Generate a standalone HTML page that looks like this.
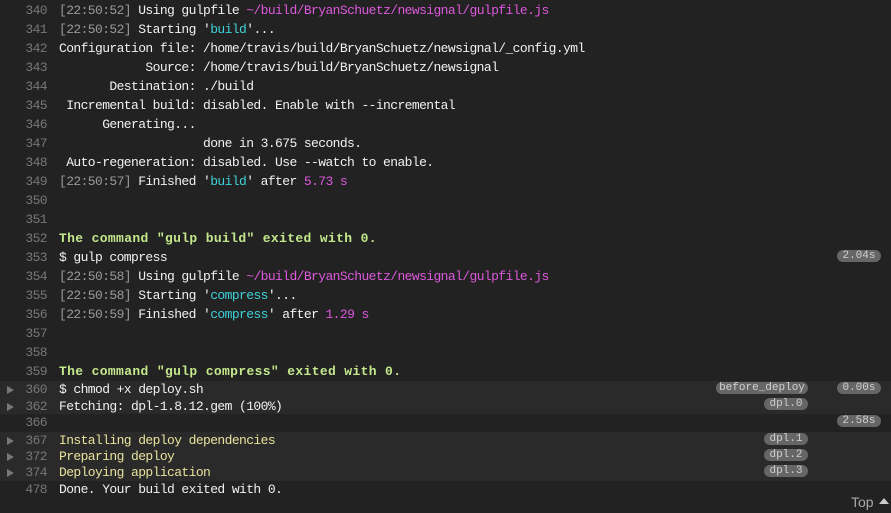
<!DOCTYPE html>
<html><head><meta charset="utf-8">
<style>
html,body{margin:0;padding:0;}
body{width:891px;height:513px;background:#222;overflow:hidden;position:relative;font-family:"Liberation Mono",monospace;font-size:13px;letter-spacing:-0.6px;color:#f1f1f1;}
.band{position:absolute;left:0;width:891px;background:#2a2a2a;}
.l{position:absolute;left:0;height:18px;line-height:18px;white-space:pre;width:891px;}
.n{position:absolute;left:0;width:47px;text-align:right;color:#777;}
.t{position:absolute;left:59px;}
.g{color:#999}
.c{color:#3dd1d8}
.m{color:#dd58dd}
.gr{color:#c4e88c;font-weight:bold;letter-spacing:0.35px}
.y{color:#e6e39c}
.tri{position:absolute;left:7px;top:5px;width:0;height:0;border-left:7px solid #777;border-top:4px solid transparent;border-bottom:4px solid transparent;}
.b{position:absolute;height:12px;line-height:13px;background:#666;color:#d0d0d0;border-radius:6px;font-size:11px;letter-spacing:0;text-align:center;font-family:"Liberation Mono",monospace;}
</style></head><body>
<div class="band" style="top:381px;height:33px"></div>
<div class="band" style="top:432px;height:49px"></div>

<div class="l" style="top:2px"><span class="n">340</span><span class="t"><span class="g">[22:50:52]</span> Using gulpfile <span class="m">~/build/BryanSchuetz/newsignal/gulpfile.js</span></span></div>
<div class="l" style="top:21px"><span class="n">341</span><span class="t"><span class="g">[22:50:52]</span> Starting '<span class="c">build</span>'...</span></div>
<div class="l" style="top:40px"><span class="n">342</span><span class="t">Configuration file: /home/travis/build/BryanSchuetz/newsignal/_config.yml</span></div>
<div class="l" style="top:59px"><span class="n">343</span><span class="t">            Source: /home/travis/build/BryanSchuetz/newsignal</span></div>
<div class="l" style="top:78px"><span class="n">344</span><span class="t">       Destination: ./build</span></div>
<div class="l" style="top:97px"><span class="n">345</span><span class="t"> Incremental build: disabled. Enable with --incremental</span></div>
<div class="l" style="top:116px"><span class="n">346</span><span class="t">      Generating...</span></div>
<div class="l" style="top:135px"><span class="n">347</span><span class="t">                    done in 3.675 seconds.</span></div>
<div class="l" style="top:154px"><span class="n">348</span><span class="t"> Auto-regeneration: disabled. Use --watch to enable.</span></div>
<div class="l" style="top:173px"><span class="n">349</span><span class="t"><span class="g">[22:50:57]</span> Finished '<span class="c">build</span>' after <span class="m">5.73 s</span></span></div>
<div class="l" style="top:192px"><span class="n">350</span></div>
<div class="l" style="top:211px"><span class="n">351</span></div>
<div class="l" style="top:230px"><span class="n">352</span><span class="t gr">The command "gulp build" exited with 0.</span></div>
<div class="l" style="top:249px"><span class="n">353</span><span class="t">$ gulp compress</span></div>
<div class="l" style="top:268px"><span class="n">354</span><span class="t"><span class="g">[22:50:58]</span> Using gulpfile <span class="m">~/build/BryanSchuetz/newsignal/gulpfile.js</span></span></div>
<div class="l" style="top:287px"><span class="n">355</span><span class="t"><span class="g">[22:50:58]</span> Starting '<span class="c">compress</span>'...</span></div>
<div class="l" style="top:306px"><span class="n">356</span><span class="t"><span class="g">[22:50:59]</span> Finished '<span class="c">compress</span>' after <span class="m">1.29 s</span></span></div>
<div class="l" style="top:325px"><span class="n">357</span></div>
<div class="l" style="top:344px"><span class="n">358</span></div>
<div class="l" style="top:363px"><span class="n">359</span><span class="t gr">The command "gulp compress" exited with 0.</span></div>

<div class="l" style="top:381px"><span class="tri"></span><span class="n">360</span><span class="t">$ chmod +x deploy.sh</span></div>
<div class="l" style="top:398px"><span class="tri"></span><span class="n">362</span><span class="t">Fetching: dpl-1.8.12.gem (100%)</span></div>
<div class="l" style="top:414px"><span class="n">366</span></div>
<div class="l" style="top:432px"><span class="tri"></span><span class="n">367</span><span class="t y">Installing deploy dependencies</span></div>
<div class="l" style="top:448px"><span class="tri"></span><span class="n">372</span><span class="t y">Preparing deploy</span></div>
<div class="l" style="top:464px"><span class="tri"></span><span class="n">374</span><span class="t y">Deploying application</span></div>
<div class="l" style="top:481px"><span class="n">478</span><span class="t">Done. Your build exited with 0.</span></div>

<span class="b" style="left:837px;top:250px;width:44px">2.04s</span>
<span class="b" style="left:716px;top:382px;width:92px">before_deploy</span>
<span class="b" style="left:837px;top:382px;width:44px">0.00s</span>
<span class="b" style="left:764px;top:398px;width:44px">dpl.0</span>
<span class="b" style="left:837px;top:415px;width:44px">2.58s</span>
<span class="b" style="left:764px;top:433px;width:44px">dpl.1</span>
<span class="b" style="left:764px;top:449px;width:44px">dpl.2</span>
<span class="b" style="left:764px;top:465px;width:44px">dpl.3</span>

<div style="position:absolute;left:851px;top:494px;font-family:'Liberation Sans',sans-serif;font-size:14px;letter-spacing:0;color:#aaa;">Top</div>
<div style="position:absolute;left:879px;top:498px;width:0;height:0;border-bottom:6px solid #ccc;border-left:5px solid transparent;border-right:5px solid transparent;"></div>
</body></html>
